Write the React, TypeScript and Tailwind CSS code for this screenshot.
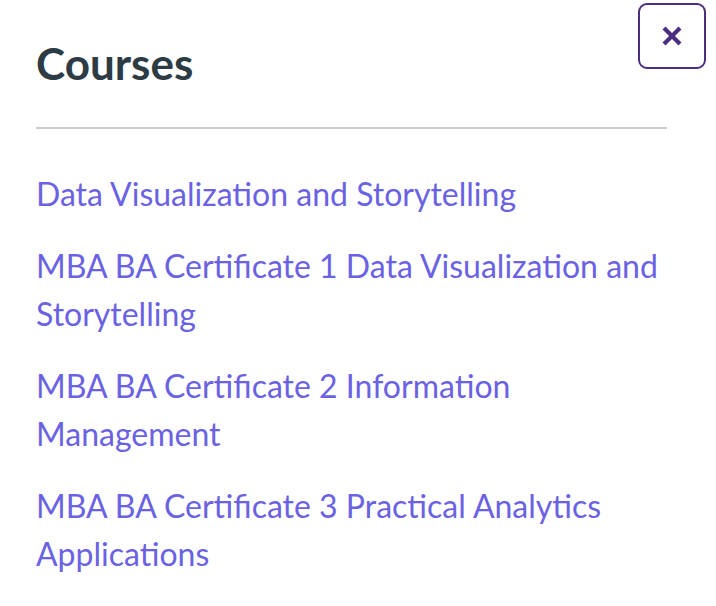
import React from "react";

const courses = [
  "Data Visualization and Storytelling",
  "MBA BA Certificate 1 Data Visualization and Storytelling",
  "MBA BA Certificate 2 Information Management",
  "MBA BA Certificate 3 Practical Analytics Applications",
];

export default function App() {
  return (
    <div
      className="relative w-[716px] h-[606px] bg-white overflow-hidden"
      style={{ fontFamily: "Lato, 'Noto Sans', sans-serif" }}
    >
      <button
        className="absolute left-[638px] top-[3px] w-[68px] h-[66px] rounded-[9px] border-2 border-[#4b2e7f] flex items-center justify-center bg-white"
        aria-label="Close"
      >
        <svg width="22" height="20" viewBox="0 0 22 20">
          <path d="M3 2 L19 18 M19 2 L3 18" stroke="#4b2e7f" strokeWidth="4.2" strokeLinecap="butt" />
        </svg>
      </button>
      <div className="pl-[36px] pr-[49px] pt-[39px]">
        <h1 className="text-[44px] leading-[48px] font-bold text-[#2d3b45]">Courses</h1>
        <div className="mt-[40px] h-[2px] bg-[#c7cdd1]" />
        <ul className="mt-[41px] flex flex-col gap-[24px]">
          {courses.map((c) => (
            <li key={c} className="text-[32px] leading-[48px] text-[#6a62e3]">
              {c}
            </li>
          ))}
        </ul>
      </div>
    </div>
  );
}
